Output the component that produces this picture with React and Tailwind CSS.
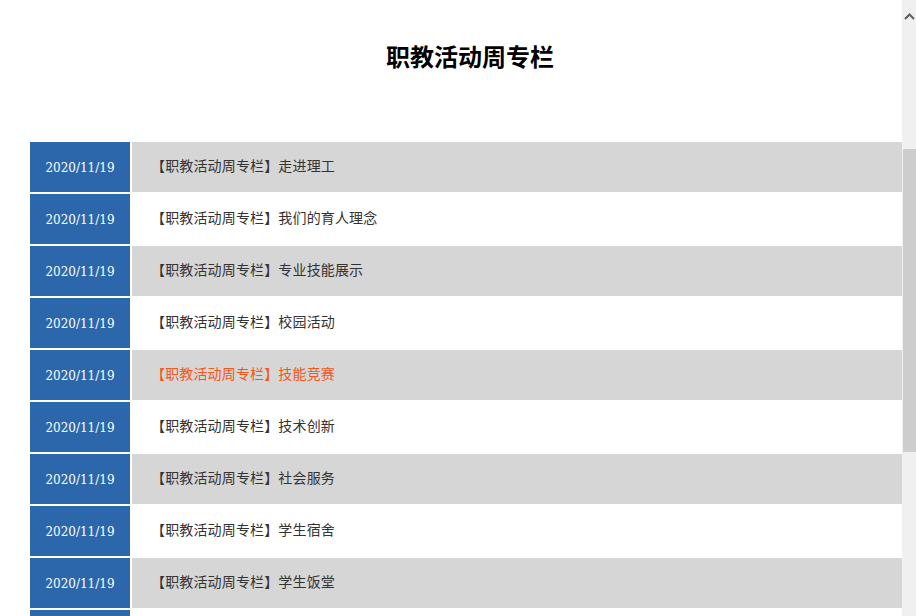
import React from 'react';

const items = [
  '走进理工',
  '我们的育人理念',
  '专业技能展示',
  '校园活动',
  '技能竞赛',
  '技术创新',
  '社会服务',
  '学生宿舍',
  '学生饭堂',
  '',
];

const cjk = { fontFamily: '"Noto Sans CJK SC", "Noto Sans", sans-serif' };

const App = () => {
  return (
    <div className="flex h-[616px] w-[916px] overflow-hidden bg-white">
      {/* Page content */}
      <div className="flex-1 overflow-hidden">
        <h1
          className="pt-[40px] pl-[38px] text-center text-[24px] font-bold leading-[32px] text-black"
          style={cjk}
        >
          职教活动周专栏
        </h1>

        <ul className="mt-[70px] ml-[30px] w-[880px]">
          {items.map((title, i) => (
            <li key={i} className="mb-[2px] flex h-[50px]">
              <div
                className="flex w-[100px] shrink-0 items-center justify-center bg-[#2c67ac] pt-[2px] text-[12px] text-white"
                style={{ fontFamily: '"DejaVu Serif", serif' }}
              >
                {title && '2020/11/19'}
              </div>
              <a
                href="#"
                className={`ml-[2px] flex flex-1 items-center pb-[3px] pl-[19px] text-[14px] tracking-[0.15px] ${
                  i % 2 === 0 ? 'bg-[#d6d6d6]' : 'bg-white'
                } ${i === 4 ? 'text-[#f5561a]' : 'text-[#333333]'}`}
                style={cjk}
              >
                {title && `【职教活动周专栏】${title}`}
              </a>
            </li>
          ))}
        </ul>
      </div>

      {/* Scrollbar */}
      <div className="flex w-[14px] shrink-0 flex-col items-end bg-[#f0f0f0]">
        <div className="flex h-[32px] w-[13px] items-center justify-center">
          <svg width="11" height="7" viewBox="0 0 11 7">
            <path d="M1 6 L5.5 1.5 L10 6" fill="none" stroke="#606060" strokeWidth="2" />
          </svg>
        </div>
        <div className="mt-[117px] h-[303px] w-[13px] bg-[#cdcdcd]"></div>
      </div>
    </div>
  );
};

export default App;
